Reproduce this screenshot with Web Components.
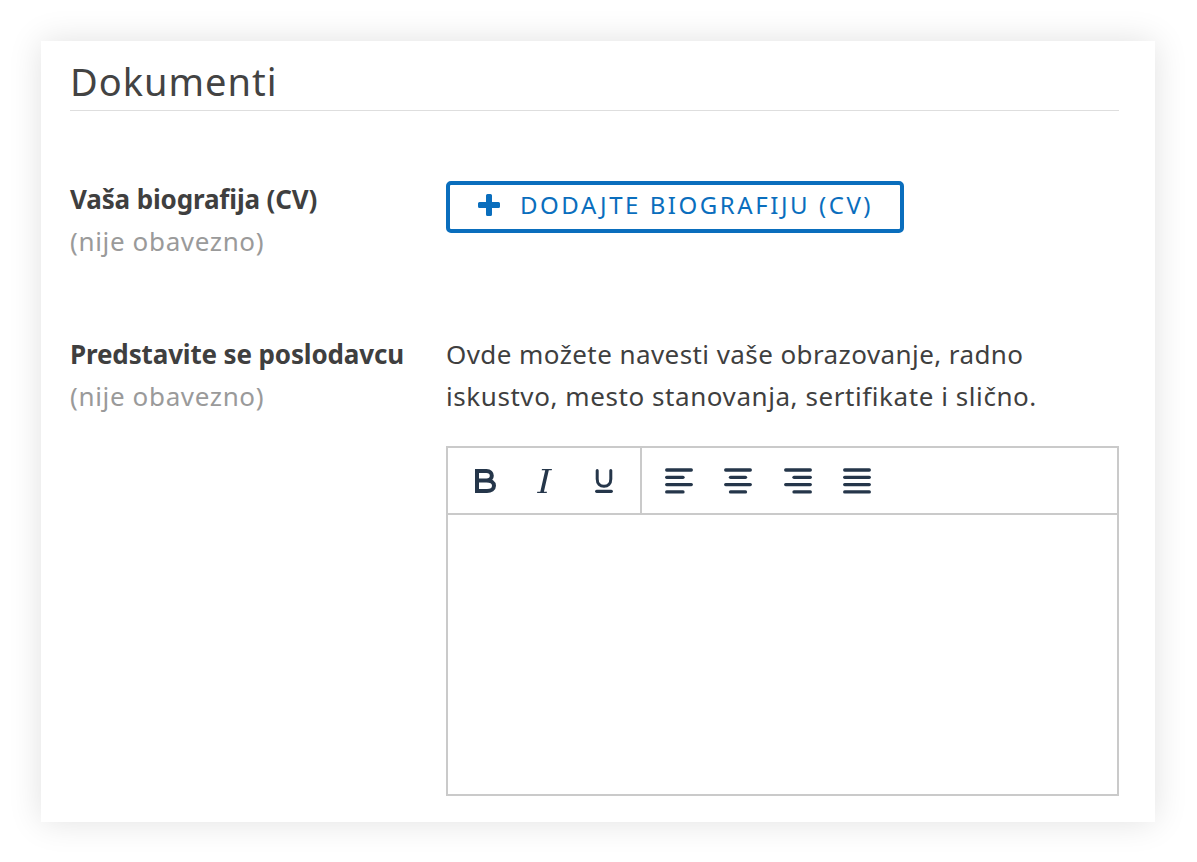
<!DOCTYPE html>
<html lang="sr">
<head>
<meta charset="utf-8">
<title>Dokumenti</title>
<style>
html, body { margin: 0; padding: 0; background: #fff; }
body { font-family: "Noto Sans", "Open Sans", sans-serif; color: #3f3f3f; }
</style>
</head>
<body>
<doc-card heading="Dokumenti">
  <form-row label="Vaša biografija (CV)" note="(nije obavezno)" style="height:155px">
    <add-button>DODAJTE BIOGRAFIJU (CV)</add-button>
  </form-row>
  <form-row label="Predstavite se poslodavcu" note="(nije obavezno)">
    <p class="hint" style="margin:0 0 29px;font-size:26px;line-height:42px;letter-spacing:.42px;white-space:nowrap">Ovde možete navesti vaše obrazovanje, radno<br><span style="letter-spacing:.57px">iskustvo, mesto stanovanja, sertifikate i slično.</span></p>
    <rich-editor></rich-editor>
  </form-row>
</doc-card>

<script>
const cardTemplate = document.createElement("template");
cardTemplate.innerHTML = `
<style>
:host { display: block; padding: 41px 42px 40px 41px; }
.card {
    background: #fff;
    box-shadow: 0 0 32px rgba(0, 0, 0, 0.12);
    height: 781px;
    box-sizing: border-box;
    padding: 0 36px 0 29px;
}
h1 {
    margin: 0 0 67px;
    height: 69px;
    border-bottom: 1px solid #dedede;
    font-size: 38px;
    line-height: 81px;
    font-weight: 400;
    letter-spacing: 1px;
    color: #434343;
    white-space: nowrap;
    overflow: hidden;
}
</style>
<div class="card">
    <h1></h1>
    <slot></slot>
</div>
`;

class DocCard extends HTMLElement {
  constructor() {
    super();
    this.attachShadow({ mode: "open" });
    this.shadowRoot.appendChild(cardTemplate.content.cloneNode(true));
    this.shadowRoot.querySelector("h1").textContent = this.getAttribute("heading");
  }
}
customElements.define("doc-card", DocCard);

const rowTemplate = document.createElement("template");
rowTemplate.innerHTML = `
<style>
:host { display: block; }
.row {
    display: grid;
    grid-template-columns: 376px 673px;
}
.label { font-size: 26px; line-height: 42px; font-weight: 700; color: #3f3f3f; letter-spacing: -.14px; white-space: nowrap; }
.note { font-size: 26px; line-height: 42px; color: #9a9a9a; letter-spacing: .65px; white-space: nowrap; }
</style>
<div class="row">
    <div>
        <div class="label"></div>
        <div class="note"></div>
    </div>
    <div><slot></slot></div>
</div>
`;

class FormRow extends HTMLElement {
  constructor() {
    super();
    this.attachShadow({ mode: "open" });
    this.shadowRoot.appendChild(rowTemplate.content.cloneNode(true));
    this.shadowRoot.querySelector(".label").textContent = this.getAttribute("label");
    this.shadowRoot.querySelector(".note").textContent = this.getAttribute("note");
  }
}
customElements.define("form-row", FormRow);

const buttonTemplate = document.createElement("template");
buttonTemplate.innerHTML = `
<style>
:host { display: block; padding-top: 3px; }
button {
    display: flex;
    align-items: center;
    width: 458px;
    height: 52px;
    box-sizing: border-box;
    padding: 0 0 5px 28px;
    background: #fff;
    border: 4px solid #0a6ebd;
    border-radius: 5px;
    color: #0a6ebd;
    font-family: inherit;
    font-size: 24px;
    letter-spacing: 2.55px;
    white-space: nowrap;
}
svg { width: 22px; height: 22px; margin-right: 20px; flex: none; }
</style>
<button>
    <svg viewBox="0 0 22 22" fill="#0a6ebd"><path d="M8 1.500a1.500 1.500 0 0 1 1.500-1.500h3a1.500 1.500 0 0 1 1.500 1.500v6.500h6.500a1.500 1.500 0 0 1 1.500 1.500v3a1.500 1.500 0 0 1-1.500 1.500h-6.500v6.500a1.500 1.500 0 0 1-1.500 1.500h-3a1.500 1.500 0 0 1-1.500-1.500v-6.500h-6.500a1.500 1.500 0 0 1-1.500-1.500v-3a1.500 1.500 0 0 1 1.500-1.500h6.500z"/></svg>
    <slot></slot>
</button>
`;

class AddButton extends HTMLElement {
  constructor() {
    super();
    this.attachShadow({ mode: "open" });
    this.shadowRoot.appendChild(buttonTemplate.content.cloneNode(true));
  }
}
customElements.define("add-button", AddButton);

const lines = (rows) => rows.map(([x1, x2], i) =>
  `<path d="M${x1} ${2 + i * 7.3}H${x2}"/>`).join("");

const editorTemplate = document.createElement("template");
editorTemplate.innerHTML = `
<style>
:host { display: block; }
.editor {
    height: 350px;
    box-sizing: border-box;
    border: 2px solid #cacaca;
    display: flex;
    flex-direction: column;
}
.toolbar {
    display: flex;
    height: 65px;
    flex: none;
    border-bottom: 2px solid #cacaca;
}
.group { display: flex; align-items: center; height: 67px; box-sizing: border-box; padding-bottom: 1px; }
.group.format { width: 194px; border-right: 2px solid #cacaca; padding-left: 8px; }
.group.align { padding-left: 7.500px; }
.tool { flex: none; width: 59.330px; display: flex; justify-content: center; }
svg { display: block; }
.line { fill: none; stroke: #25364a; stroke-width: 3.300; stroke-linecap: round; }
</style>
<div class="editor">
    <div class="toolbar">
        <div class="group format">
            <span class="tool"><svg width="21" height="24" viewBox="0 0 21 24" fill="none" stroke="#25364a" stroke-width="4"><path d="M2 2H11.500C15 2 16.800 4.200 16.800 6.800C16.800 9.400 15 11.500 11.500 11.500H2M11.500 11.500C16 11.500 19 13.500 19 16.800C19 20 16 22 12 22H2V0"/></svg></span>
            <span class="tool"><svg width="15" height="24" viewBox="0 0 15 24" fill="#25364a"><path d="M5 0H15L14.700 1.300H11.800L6.900 22.700H10L9.700 24H0L.3 22.700H3.300L8.200 1.300H4.700z"/></svg></span>
            <span class="tool"><svg width="18" height="24" viewBox="0 0 18 24" fill="none" stroke="#25364a" stroke-linecap="round"><path d="M2.200 1.500V10C2.200 14.800 5 17.300 9 17.300C13 17.300 15.800 14.800 15.800 10V1.500" stroke-width="3"/><path d="M1.700 22.300H16.300" stroke-width="3.300"/></svg></span>
        </div>
        <div class="group align">
            <span class="tool"><svg width="28" height="26" viewBox="0 0 28 26"><g class="line">${lines([[1.7, 26.3], [1.7, 18], [1.7, 26.3], [1.7, 18]])}</g></svg></span>
            <span class="tool"><svg width="28" height="26" viewBox="0 0 28 26"><g class="line">${lines([[1.7, 26.3], [6.5, 21.5], [1.7, 26.3], [6.5, 21.5]])}</g></svg></span>
            <span class="tool"><svg width="28" height="26" viewBox="0 0 28 26"><g class="line">${lines([[1.7, 26.3], [10, 26.3], [1.7, 26.3], [10, 26.3]])}</g></svg></span>
            <span class="tool"><svg width="28" height="26" viewBox="0 0 28 26"><g class="line">${lines([[1.7, 26.3], [1.7, 26.3], [1.7, 26.3], [1.7, 26.3]])}</g></svg></span>
        </div>
    </div>
    <div class="body"></div>
</div>
`;

class RichEditor extends HTMLElement {
  constructor() {
    super();
    this.attachShadow({ mode: "open" });
    this.shadowRoot.appendChild(editorTemplate.content.cloneNode(true));
  }
}
customElements.define("rich-editor", RichEditor);
</script>
</body>
</html>
